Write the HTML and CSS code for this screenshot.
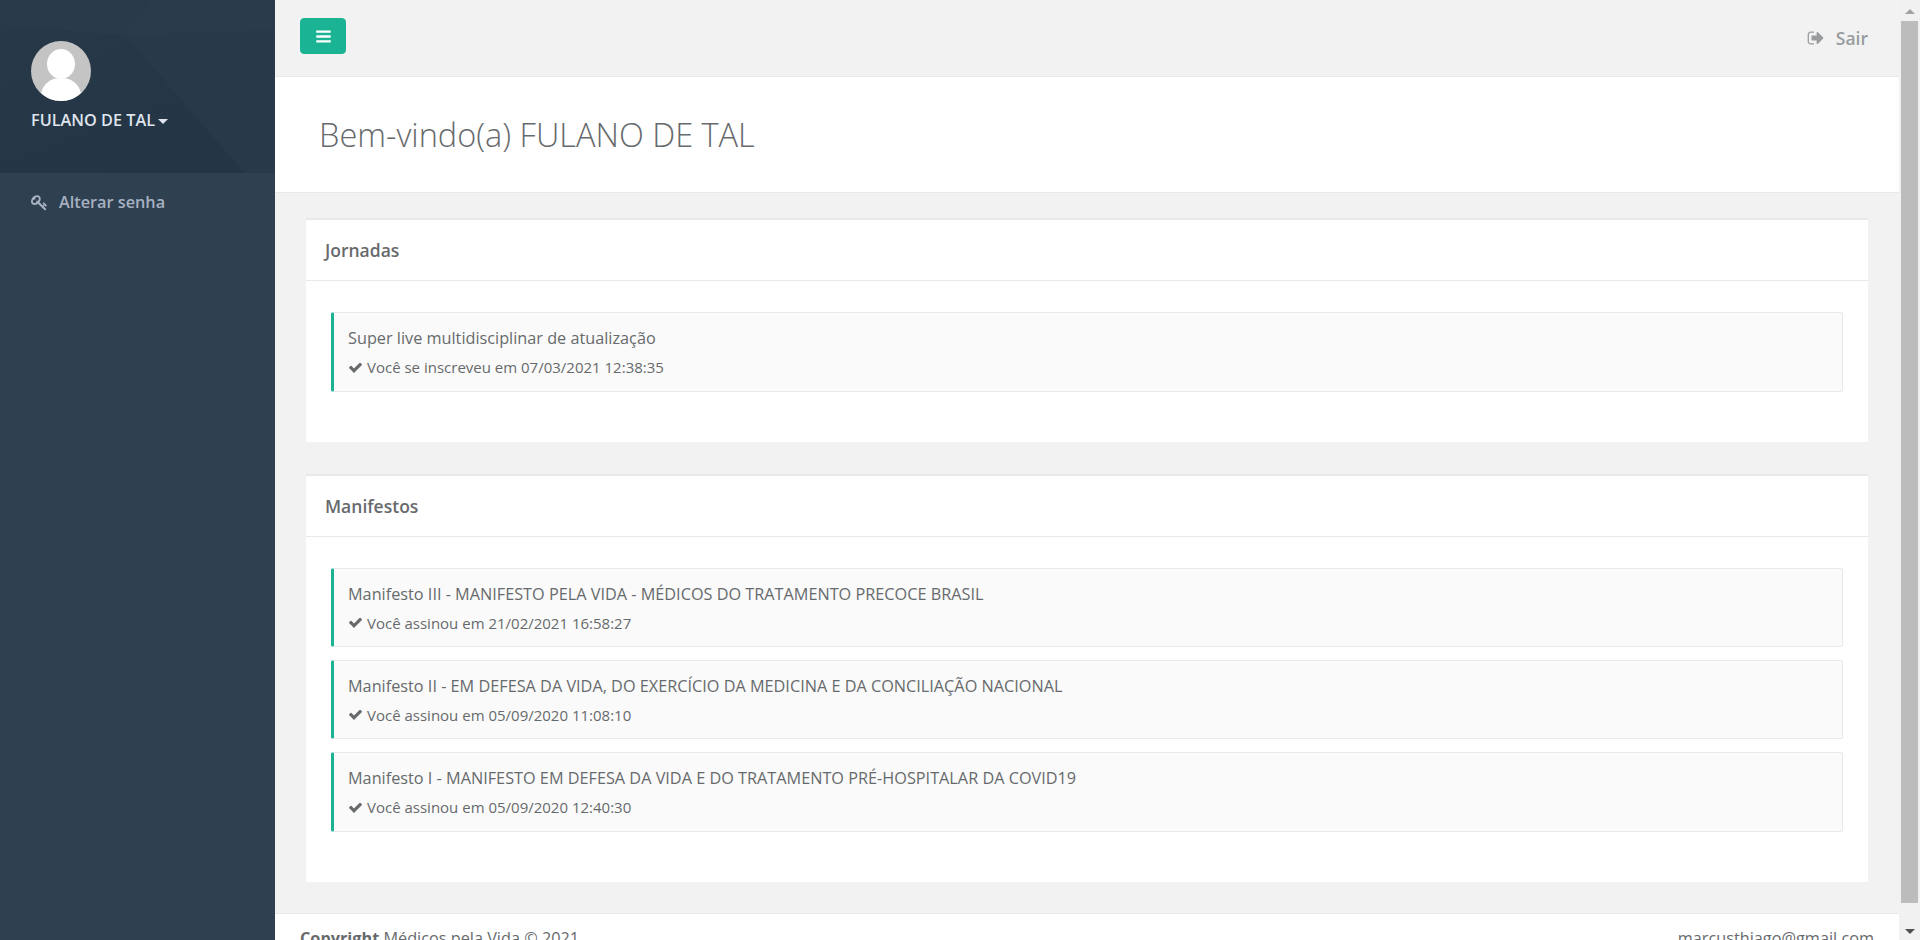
FILE: index.html
```html
<!DOCTYPE html>
<html lang="pt-BR">
<head>
  <meta charset="UTF-8">
  <meta name="viewport" content="width=device-width, initial-scale=1.0">
  <title>Médicos pela Vida</title>
  <link rel="stylesheet" href="styles.css">
</head>
<body>
  <!-- menu lateral -->
  <nav class="sidebar">
    <div class="profile">
      <svg class="profile-bg" viewBox="0 0 275 173" preserveAspectRatio="none" aria-hidden="true">
        <defs>
          <linearGradient id="profile-dark" x1="0" y1="0" x2="0.6" y2="1">
            <stop offset="0" stop-color="#273949"/>
            <stop offset="1" stop-color="#243545"/>
          </linearGradient>
        </defs>
        <polygon points="0,0 150,0 125,35 0,25" fill="#293b4b"/>
        <polygon points="0,25 125,35 245,173 0,173" fill="url(#profile-dark)"/>
        <polygon points="245,173 275,120 275,173" fill="#283a4a"/>
        <polygon points="150,0 275,0 275,30 125,35" fill="#2a3c4c"/>
      </svg>
      <svg class="avatar" viewBox="0 0 60 60" aria-hidden="true">
        <circle cx="30" cy="30" r="30" fill="#c4c4c4"/>
        <ellipse cx="30" cy="23" rx="14" ry="15" fill="#fff"/>
        <path d="M10 52c3-11 11-15 20-15s17 4 20 15c-5 5-12 8-20 8s-15-3-20-8z" fill="#fff"/>
      </svg>
      <div class="profile-name">FULANO DE TAL<span class="caret"></span></div>
    </div>
    <a class="nav-link" href="#">
      <svg class="icon icon-key" viewBox="0 0 1792 1792" aria-hidden="true"><path d="M832 512q0-80-56-136t-136-56-136 56-56 136q0 42 19 83-41-19-83-19-80 0-136 56t-56 136 56 136 136 56 136-56 56-136q0-42-19-83 41 19 83 19 80 0 136-56t56-136zm851 704q0 17-49 66t-66 49q-9 0-28.5-16t-36.5-33-38.5-40-24.5-26l-96 96 220 220q28 28 28 68 0 42-39 81t-81 39q-40 0-68-28l-671-671q-176 131-365 131-163 0-265.5-102.5t-102.5-265.5q0-160 95-313t248-248 313-95q163 0 265.5 102.5t102.5 265.5q0 189-131 365l355 355 96-96q-2-2-26-24.5t-40-38.5-33-36.5-16-28.5q0-17 49-66t66-49q13 0 23 10 6 6 46 44.5t82 79.5 86.5 86 73 78 28.5 41z"/></svg>
      Alterar senha
    </a>
  </nav>

  <div class="page">
    <header class="topbar">
      <button class="menu-btn" type="button">
        <svg class="icon icon-bars" viewBox="0 0 1792 1792" aria-hidden="true"><path d="M1664 1344v128q0 26-19 45t-45 19h-1408q-26 0-45-19t-19-45v-128q0-26 19-45t45-19h1408q26 0 45 19t19 45zm0-512v128q0 26-19 45t-45 19h-1408q-26 0-45-19t-19-45v-128q0-26 19-45t45-19h1408q26 0 45 19t19 45zm0-512v128q0 26-19 45t-45 19h-1408q-26 0-45-19t-19-45v-128q0-26 19-45t45-19h1408q26 0 45 19t19 45z"/></svg>
      </button>
      <a class="logout" href="#">
        <svg class="icon icon-out" viewBox="0 0 1792 1792" aria-hidden="true"><path d="M704 1440q0 4 1 20t.5 26.5-3 23.5-10 19.5-20.5 6.5h-320q-119 0-203.5-84.5t-84.5-203.5v-704q0-119 84.5-203.5t203.5-84.5h320q13 0 22.5 9.5t9.5 22.5q0 4 1 20t.5 26.5-3 23.5-10 19.5-20.5 6.5h-320q-66 0-113 47t-47 113v704q0 66 47 113t113 47h312l11.5 1 11.5 3 8 5.5 7 9 2 13.5zm928-544q0 26-19 45l-544 544q-19 19-45 19t-45-19-19-45v-288h-448q-26 0-45-19t-19-45v-384q0-26 19-45t45-19h448v-288q0-26 19-45t45-19 45 19l544 544q19 19 19 45z"/></svg>
        Sair
      </a>
    </header>

    <section class="page-heading">
      <h2>Bem-vindo(a) FULANO DE TAL</h2>
    </section>

    <main class="content">
      <section class="panel">
        <h5 class="panel-title">Jornadas</h5>
        <div class="panel-body">
          <div class="item">
            <p class="item-title">Super live multidisciplinar de atualização</p>
            <p class="item-info"><svg class="icon icon-check" viewBox="0 0 1792 1792" aria-hidden="true"><path d="M1671 566q0 40-28 68l-724 724-136 136q-28 28-68 28t-68-28l-136-136-362-362q-28-28-28-68t28-68l136-136q28-28 68-28t68 28l294 295 656-657q28-28 68-28t68 28l136 136q28 28 28 68z"/></svg>Você se inscreveu em 07/03/2021 12:38:35</p>
          </div>
        </div>
      </section>

      <section class="panel">
        <h5 class="panel-title">Manifestos</h5>
        <div class="panel-body">
          <div class="item">
            <p class="item-title">Manifesto III - MANIFESTO PELA VIDA - MÉDICOS DO TRATAMENTO PRECOCE BRASIL</p>
            <p class="item-info"><svg class="icon icon-check" viewBox="0 0 1792 1792" aria-hidden="true"><path d="M1671 566q0 40-28 68l-724 724-136 136q-28 28-68 28t-68-28l-136-136-362-362q-28-28-28-68t28-68l136-136q28-28 68-28t68 28l294 295 656-657q28-28 68-28t68 28l136 136q28 28 28 68z"/></svg>Você assinou em 21/02/2021 16:58:27</p>
          </div>
          <div class="item">
            <p class="item-title">Manifesto II - EM DEFESA DA VIDA, DO EXERCÍCIO DA MEDICINA E DA CONCILIAÇÃO NACIONAL</p>
            <p class="item-info"><svg class="icon icon-check" viewBox="0 0 1792 1792" aria-hidden="true"><path d="M1671 566q0 40-28 68l-724 724-136 136q-28 28-68 28t-68-28l-136-136-362-362q-28-28-28-68t28-68l136-136q28-28 68-28t68 28l294 295 656-657q28-28 68-28t68 28l136 136q28 28 28 68z"/></svg>Você assinou em 05/09/2020 11:08:10</p>
          </div>
          <div class="item">
            <p class="item-title">Manifesto I - MANIFESTO EM DEFESA DA VIDA E DO TRATAMENTO PRÉ-HOSPITALAR DA COVID19</p>
            <p class="item-info"><svg class="icon icon-check" viewBox="0 0 1792 1792" aria-hidden="true"><path d="M1671 566q0 40-28 68l-724 724-136 136q-28 28-68 28t-68-28l-136-136-362-362q-28-28-28-68t28-68l136-136q28-28 68-28t68 28l294 295 656-657q28-28 68-28t68 28l136 136q28 28 28 68z"/></svg>Você assinou em 05/09/2020 12:40:30</p>
          </div>
        </div>
      </section>
    </main>

    <footer class="footer">
      <div><strong>Copyright</strong> Médicos pela Vida © 2021</div>
      <div>marcusthiago@gmail.com</div>
    </footer>
  </div>

  <!-- barra de rolagem -->
  <div class="scrollbar" aria-hidden="true">
    <span class="arrow arrow-up"></span>
    <span class="thumb"></span>
    <span class="arrow arrow-down"></span>
  </div>
</body>
</html>
```

FILE: styles.css
```css
html, body {
  height: 100%;
}

body {
  display: flex;
  margin: 0;
  overflow: hidden;
  background-color: #f2f2f2;
  color: #676a6c;
  font-family: "Open Sans", "Liberation Sans", sans-serif;
  font-size: 16px;
}

.icon {
  display: block;
  flex: none;
  fill: currentColor;
}

/* menu lateral */
.sidebar {
  flex: none;
  width: 275px;
  background-color: #2f4050;
}

.profile {
  position: relative;
  height: 173px;
  padding: 41px 0 0 31px;
  box-sizing: border-box;
  overflow: hidden;
  background-color: #283a4a;
}

.profile-bg {
  position: absolute;
  top: 0;
  left: 0;
  width: 100%;
  height: 100%;
}

.avatar {
  position: relative;
  display: block;
  width: 60px;
  height: 60px;
}

.profile-name {
  position: relative;
  display: flex;
  align-items: center;
  margin-top: 6px;
  color: #dfe4ed;
  font-size: 16.25px;
  font-weight: 600;
  line-height: 27px;
}

.caret {
  margin: 2px 0 0 3px;
  border-top: 5px solid #dfe4ed;
  border-left: 5px solid transparent;
  border-right: 5px solid transparent;
}

.nav-link {
  display: flex;
  align-items: center;
  gap: 11px;
  padding: 18px 31px;
  color: #a7b1c2;
  font-size: 16.25px;
  font-weight: 600;
  line-height: 22px;
  text-decoration: none;
}

.icon-key {
  width: 17px;
  height: 17px;
}

/* area principal */
.page {
  display: flex;
  flex: 1;
  flex-direction: column;
  min-width: 0;
}

.topbar {
  display: flex;
  flex: none;
  align-items: center;
  justify-content: space-between;
  height: 76px;
  padding: 0 31px 0 25px;
  border-bottom: 1px solid #e7eaec;
}

.menu-btn {
  display: flex;
  align-items: center;
  justify-content: center;
  width: 46px;
  height: 36px;
  margin-top: -4px;
  padding: 0;
  border: 1px solid #1ab394;
  border-radius: 4px;
  background-color: #1ab394;
  color: #fff;
}

.icon-bars {
  width: 17px;
  height: 17px;
}

.logout {
  display: flex;
  align-items: center;
  gap: 11px;
  color: #999c9e;
  font-size: 17.5px;
  font-weight: 600;
  text-decoration: none;
}

.icon-out {
  width: 18px;
  height: 18px;
}

.page-heading {
  flex: none;
  height: 115px;
  padding: 0 44px;
  background-color: #fff;
  border-bottom: 1px solid #e7eaec;
}

.page-heading h2 {
  margin: 0;
  color: #676a6c;
  font-size: 32.5px;
  font-weight: 300;
  line-height: 115px;
}

.content {
  display: flex;
  flex: none;
  flex-direction: column;
  gap: 32px;
  padding: 25px 31px 31.5px;
}

.panel {
  border-top: 2px solid #e7eaec;
  background-color: #fff;
}

.panel-title {
  height: 60px;
  margin: 0;
  padding: 0 19px;
  border-bottom: 1px solid #e7eaec;
  color: #676a6c;
  font-size: 17.5px;
  font-weight: 600;
  line-height: 60px;
}

.panel-body {
  display: flex;
  flex-direction: column;
  gap: 12.75px;
  padding: 31px 25px 50px;
}

.item {
  height: 79.5px;
  padding: 0 14px;
  box-sizing: border-box;
  border: 1px solid #e7eaec;
  border-left: 3px solid #1ab394;
  border-radius: 2px;
  background-color: #fafafa;
}

.item-title {
  margin: 13px 0 0;
  font-size: 16.25px;
  line-height: 25px;
}

.item-info {
  display: flex;
  align-items: center;
  gap: 4px;
  margin: 5px 0 0;
  font-size: 15px;
  line-height: 22px;
}

.icon-check {
  width: 15px;
  height: 15px;
}

.footer {
  display: flex;
  flex: none;
  justify-content: space-between;
  padding: 12px 25px;
  border-top: 1px solid #e7eaec;
  background-color: #fff;
  font-size: 16.25px;
  line-height: 24px;
}

/* barra de rolagem desenhada */
.scrollbar {
  display: flex;
  flex: none;
  flex-direction: column;
  align-items: center;
  box-sizing: border-box;
  width: 21px;
  height: 100%;
  padding: 0 1px;
  background-color: #f1f1f1;
}

.arrow {
  flex: none;
  width: 0;
  border-left: 5px solid transparent;
  border-right: 5px solid transparent;
}

.arrow-up {
  margin: 9px 0 7px;
  border-bottom: 5px solid #a3a3a3;
}

.arrow-down {
  margin: 26px 0 6px;
  border-top: 5px solid #505050;
}

.thumb {
  flex: 1;
  width: 17px;
  background-color: #bcbcbc;
}
```
